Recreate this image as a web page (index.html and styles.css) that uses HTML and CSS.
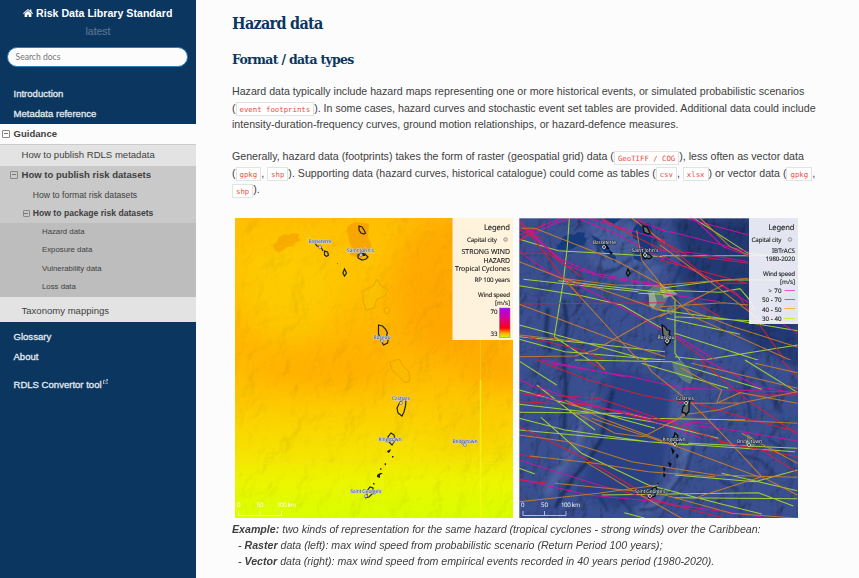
FILE: index.html
```
<!DOCTYPE html>
<html lang="en">
<head>
<meta charset="utf-8">
<title>Hazard data</title>
<link rel="stylesheet" href="styles.css">
</head>
<body>
<nav class="side">
  <div class="brand"><svg class="home" viewBox="0 0 20 16"><path fill="#fff" d="M10 0 0 8.400l1.300 1.500L10 2.700l8.700 7.200L20 8.400l-3.200-2.700V.8H14v2.500zM10 4 3.200 9.700V16H8.500v-4.500h3V16h5.300V9.700z"/></svg>Risk Data Library Standard</div>
  <div class="version">latest</div>
  <div class="search">Search docs</div>
  <a class="top intro">Introduction</a>
  <a class="top meta">Metadata reference</a>
  <a class="current"><i class="box"></i>Guidance</a>
  <a class="l2">How to publish RDLS metadata</a>
  <div class="open">
    <a class="l2b"><i class="box"></i>How to publish risk datasets</a>
    <a class="l3">How to format risk datasets</a>
    <a class="l3 bold"><i class="box"></i>How to package risk datasets</a>
  </div>
  <div class="deep">
    <a>Hazard data</a><a>Exposure data</a><a>Vulnerability data</a><a>Loss data</a>
  </div>
  <a class="l2 tax">Taxonomy mappings</a>
  <a class="top gloss">Glossary</a>
  <a class="top">About</a>
  <a class="top tool">RDLS Convertor tool<svg class="ext" viewBox="0 0 12 12"><path fill="none" stroke="#e4eaf0" stroke-width="1.500" d="M5 3H1v8h8V7M4.500 7.500 10.500 1.500M7 1.200h4V5"/></svg></a>
</nav>
<main>
  <h1>Hazard data</h1>
  <h2>Format / data types</h2>
  <p>Hazard data typically include hazard maps representing one or more historical events, or simulated probabilistic scenarios<br>(<code>event footprints</code>). In some cases, hazard curves and stochastic event set tables are provided. Additional data could include<br>intensity-duration-frequency curves, ground motion relationships, or hazard-defence measures.</p>
  <p>Generally, hazard data (footprints) takes the form of raster (geospatial grid) data (<code>GeoTIFF / COG</code>), less often as vector data<br>(<code>gpkg</code>, <code>shp</code>). Supporting data (hazard curves, historical catalogue) could come as tables (<code>csv</code>, <code>xlsx</code>) or vector data (<code>gpkg</code>,<br><code>shp</code>).</p>
  <div class="maps">
    <svg width="278" height="300" viewBox="235 218 278 300">
      <defs>
        <linearGradient id="heat" x1="0" y1="0" x2="0" y2="1">
          <stop offset="0" stop-color="#ffc000"/><stop offset=".15" stop-color="#ffc400"/><stop offset=".42" stop-color="#ffb600"/><stop offset=".54" stop-color="#ffbe00"/><stop offset=".66" stop-color="#fcd000"/><stop offset=".78" stop-color="#f6e200"/><stop offset=".88" stop-color="#ecf600"/><stop offset="1" stop-color="#d8ff00"/>
        </linearGradient>
        <linearGradient id="ramp" x1="0" y1="0" x2="0" y2="1">
          <stop offset="0" stop-color="#a800ff"/><stop offset=".4" stop-color="#e00080"/><stop offset=".68" stop-color="#ff0010"/><stop offset=".86" stop-color="#ffb000"/><stop offset="1" stop-color="#c8ff00"/>
        </linearGradient>
        <filter id="soft" x="-50%" y="-50%" width="200%" height="200%"><feGaussianBlur stdDeviation="14"/></filter>
        <filter id="relief" x="0" y="0" width="100%" height="100%">
          <feTurbulence type="fractalNoise" baseFrequency=".04 .035" numOctaves="4" seed="8"/>
          <feDiffuseLighting surfaceScale="6" diffuseConstant="1.150" lighting-color="#fff"><feDistantLight azimuth="215" elevation="60"/></feDiffuseLighting>
        </filter>
      </defs>
      <path fill="url(#heat)" d="M235 218h278v300H235z"/>
      <g filter="url(#soft)">
        <ellipse cx="290" cy="290" rx="50" ry="52" fill="#fccc00" opacity=".8"/>
        <ellipse cx="450" cy="285" rx="60" ry="70" fill="#ffa200" opacity=".75"/>
        <ellipse cx="325" cy="370" rx="70" ry="16" fill="#ffa600" opacity=".6"/>
        <ellipse cx="500" cy="368" rx="40" ry="14" fill="#ffa000" opacity=".7"/>
        <ellipse cx="470" cy="425" rx="40" ry="25" fill="#fac800" opacity=".5"/>
      </g>
      <path class="multiply" filter="url(#relief)" opacity=".18" d="M235 218h278v300H235z"/>
      <path fill="#f6a600" opacity=".8" d="M273 245l4-3 2-5 6-3 3 1 4-2 7 1-1 4 3 2-6 3-2 3-6 1-8 6-4-3z"/>
      <path fill="#f59a00" opacity=".7" d="M347 228l4-4 6-2 12 2-1 13 4 10-4 3-6 9-12-4 2-7-3-7z"/>
      <path fill="#f2c800" fill-opacity=".4" stroke="#e5a000" stroke-width=".8" d="M363 291l10-5 4-7 4 7 7 4-3 6-8 3-3 9-8 2-3-10zM384 309l3-2 3 3-2 4-3-1z"/>
      <path fill="#f6bd00" fill-opacity=".3" stroke="#e0a000" stroke-width=".8" d="M390 362l9-3 4 7 6 6 1 9-5 2-6-7-7-6z"/>
      <path stroke="#ffda20" stroke-width=".8" d="M235 463.500h278"/><path stroke="#ffd420" stroke-opacity=".5" d="M480.500 340v40"/><path stroke="#f8f820" stroke-opacity=".7" stroke-width="1.500" d="M480.500 380v138"/>
      <g fill="none" stroke="#202418" stroke-width="1.200">
        <path d="M359 226l3 1 2 3 1.500 3-1.500 1-3-1-2-3zM315 243l2 3 4 1 2 4M324.500 251l3 1 1 3-2 1.500-2-1.500zM358 255l3-2 4 1 3 3-2 2-4 1-4-2zM344.500 269l2 4-2 3-1.600-3zM378.500 325l4 1 3 3 2 4-1 2 2 3-1 5-4 2-3-6-2-5z"/>
        <path d="M401 401l3-2 2 1-.5 6-1.500 6-2 4-4-3-1-5 2-4zM391 433l3 2 1 5-3 5-3-3-1-5zM365 498l2-1v-6l3-4 3 1 0 5-4 4z"/>
      </g>
      <path fill="#222" d="M358 254h7v2h-5zM387 451l4-2-1 3-2 1zM392 456h1.500v1.500H392zM384 464l2-1v2.500zM380 468l2 1-2 1zM377 475l3-2h3l-3 2v3l-3-1zM373 483h1.500v1.500H373zM337 263h1v1z"/>
      <g class="names left">
        <text x="308.500" y="243" textLength="23">Basseterre</text><text x="347" y="252" textLength="27">Saint John's</text><text x="373.500" y="339" textLength="17">Roseau</text><text x="392" y="400" textLength="18">Castries</text><text x="378.500" y="440.500" textLength="23">Kingstown</text><text x="452.500" y="442.500" textLength="25">Bridgetown</text><text x="350.500" y="493" textLength="31">Saint George's</text>
      </g>
      <g fill="#dde" stroke="#667" stroke-width=".6"><circle cx="320" cy="247" r="1.500"/><circle cx="361" cy="255" r="1.500"/><circle cx="382" cy="341" r="1.500"/><circle cx="401" cy="403" r="1.500"/><circle cx="392" cy="442" r="1.500"/><circle cx="465" cy="445" r="1.500"/><circle cx="366" cy="496" r="1.500"/></g>
      <g class="scale"><text x="237" y="507">0</text><text x="256.500" y="507" textLength="7">50</text><text x="277" y="507" textLength="19">100 km</text><path d="M238.500 511v4.500H281.500V511M260 511v4"/></g>
      <path fill="#fff7ea" fill-opacity=".94" d="M452.500 218H513v122H452.500z"/>
      <g class="legend">
        <text class="title" x="484" y="230" textLength="26">Legend</text>
        <text x="467" y="241.500" textLength="30">Capital city</text>
        <text class="mid" x="461.500" y="254" textLength="48.500">STRONG WIND</text><text class="mid" x="483.500" y="262.500" textLength="26.500">HAZARD</text><text class="mid" x="455" y="271" textLength="55">Tropical Cyclones</text>
        <text x="474.500" y="282" textLength="35.500">RP 100 years</text><text x="478" y="297" textLength="32">Wind speed</text><text x="495" y="305" textLength="15">[m/s]</text><text x="490.500" y="314" textLength="7">70</text><text x="490.500" y="335.500" textLength="7">33</text>
      </g>
      <circle cx="505.500" cy="239.500" r="1.800" fill="#ddd" stroke="#777" stroke-width=".7"/>
      <path fill="url(#ramp)" stroke="#777" stroke-width=".5" d="M499.500 308h10.500v29.500h-10.500z"/>
    </svg>
    <svg width="279" height="300" viewBox="519 218 279 300">
      <defs>
        <filter id="sea" x="0" y="0" width="100%" height="100%">
          <feTurbulence type="fractalNoise" baseFrequency=".05 .04" numOctaves="5" seed="21"/>
          <feDiffuseLighting surfaceScale="8" diffuseConstant="1.200" lighting-color="#fff"><feDistantLight azimuth="215" elevation="55"/></feDiffuseLighting>
        </filter>
        <filter id="fade" x="-50%" y="-50%" width="200%" height="200%"><feGaussianBlur stdDeviation="3"/></filter>
        <filter id="thin" x="-50%" y="-50%" width="200%" height="200%"><feGaussianBlur stdDeviation="1.100"/></filter>
        <clipPath id="upper"><path d="M0 0h450v450H0z"/></clipPath>
      </defs>
      <path fill="#394f90" d="M519 218h279v300H519z"/>
      <g filter="url(#fade)">
        <path fill="#1c3268" opacity=".75" d="M672 218h126v150l-40-20-50-40-30-30 4-25z"/>
        <path fill="#5068a8" opacity=".6" d="M590 222h45l10 30 20 20-25 20-50-30zM655 375l30 10 10 50-14 40-12-40z"/>
        <path fill="none" stroke="#5b70ac" stroke-width="8" opacity=".7" d="M688 445l-10 30-22 30-18 8M595 395l-20 50-30 50"/>
      </g>
      <path class="multiply" filter="url(#sea)" opacity=".48" d="M519 218h279v300H519z"/>
      <g filter="url(#fade)"><path fill="#2b4283" d="M610 365l62 20-5 60-15 50-40 12-34-15 25-60z"/></g>
      <g filter="url(#thin)" fill="none" stroke="#14264f">
        <path stroke-width="3.500" opacity=".75" d="M613 390l-6 25-6 25-12 20-16 18-10 16-8 14M564 300l3 25-4 30 3 30-2 45M548 308l-2 22 4 22"/>
        <path stroke-width="1.800" opacity=".8" d="M694 445l-8 26-12 16-13 18-8 4-14 1M683 262l-10 22 7 30M632 258l-16 12-12 2M640 266l-14 10M594 238l10 22"/>
        <path stroke-width="1.500" opacity=".75" d="M742 372l6 30 3 18M756 370l12 22 14 20M740 455l20 5 14 14M620 498l12 14M600 497l8 14M720 480l18 10M760 335l18 6M770 440l14 10 8 16"/>
      </g>
      <path fill="#153a7d" d="M557 246l4-4 2-5 6-3 5 1 4-3 7 1-1 4 3 2-3 6-7 1-5 3-8 1-7-1zM632 232l3-6 4-4 12 2 2 12-2 6 1 8-5 5-5 7-8-3-1-5 6-5-1-8-5-3zM602 218h20l-8 6zM591 235l7 3 7 6 11 13-1 6-8-8-8-9z"/>
      <path fill="#64847c" fill-opacity=".8" d="M647 291l8-6 13 2 3 3-6 13-6 8-7-2zM672 362l9-2 9 10 3 8-3 6-8-4-8-9zM747 434l5 3 4 8-4 2-5-4zM667 308l5-2 3 5-4 4-4-2z"/>
      <path fill="#a5b4a0" fill-opacity=".8" d="M649 294l5-2 3 11-4 6-4-4zM660 290h12l6 4-6 2-8 2z"/>
      <g transform="translate(515 210) scale(.33333)" class="tracks"><g clip-path="url(#upper)">
        <path class="y" d="M13 88L130 122 450 140M163 24L157 110 145 215 118 380 240 462M25 208L370 245M13 227L200 257 320 285 450 360M13 345L200 395 450 465M13 380L240 402 450 425M13 388L150 425 450 450M370 250L450 253M130 212L450 248"/>
        <path class="m" d="M13 50L60 70 120 40 170 24M13 125L100 185 240 250 370 320 450 368M45 70L150 165 260 200 450 232M185 24L300 70 450 150M13 75L140 24M220 24L450 92M360 30L450 62M13 30L60 80 140 150 240 190 450 228M13 95L60 60"/>
        <path class="r" d="M13 35L90 130 145 205 200 262M13 130L100 130 200 200M13 282L450 278M13 375L200 420 270 450M265 30L450 125M370 24L450 110M13 60L80 85M13 90L90 40M260 24L320 60"/>
        <path class="o" d="M13 155L140 205 300 225 450 228M20 55L60 55 300 150 440 225M13 440L180 438 240 420 400 330 450 310M13 283L100 315 300 390 450 440M140 205L250 235 450 305M365 60L380 150 440 225M350 24L450 100M145 205L300 375 380 460M13 375L200 395"/>
      </g></g>
      <g transform="translate(660 210) scale(.33333)" class="tracks"><g clip-path="url(#upper)">
        <path class="y" d="M100 24L265 130 413 145M0 137H413M0 240L180 247 240 236 265 265 285 300M0 220L45 270 45 430 60 450M45 320L413 340M20 325L240 373M45 370L330 462M45 440L130 450 413 405M0 300L220 330 413 362M0 235L190 210H413"/>
        <path class="m" d="M0 60L50 70 265 125M75 24L265 75M0 120L110 130 265 155M100 24L190 110 413 190M0 135L150 205 413 370M0 250L180 275M45 375L200 470"/>
        <path class="r" d="M0 85L130 195 230 250 310 360 385 465M0 150L260 220M0 90L80 135 265 160M90 270L180 320M50 385L160 465M190 220H265M413 60L320 24"/>
        <path class="o" d="M120 24L210 110 265 135M0 105L150 215 300 330M0 225L265 205M0 290L190 278 265 285M0 225L100 320 413 460M50 285L220 350 413 412M0 320L190 225"/>
      </g></g>
      <g transform="translate(515 360) scale(.33333)" class="tracks">
        <path class="y" d="M15 5L125 75M65 75L200 180 240 210M13 90L120 120 330 180 420 205M13 157L330 160 400 175 690 180M13 133L250 160 410 185 610 235M13 175L150 210 400 245 840 275M13 210L400 245 520 255M78 172L200 280 400 375 610 430 740 462M13 325L60 342M328 458L390 475M180 0L470 5 740 88M380 10L640 85M690 0L847 97M520 250L847 265M480 345L720 365 847 330M480 413L847 416M260 405L730 398 835 438M620 340L847 392"/>
        <path class="m" d="M13 100L130 120 330 155 450 185 650 210 847 243M65 80L220 132 400 180 560 235M13 57L65 85M13 300L250 375 480 435 740 470M13 358L220 405 430 425M100 10L350 50 500 85 847 97M80 0L330 50M570 0L730 80 847 100M440 180L600 192"/>
        <path class="r" d="M65 0L220 60 380 105 510 130M13 100L250 115 400 165 640 250 847 290M13 125L220 135 410 180M13 200L200 290 430 425 620 472M555 0L690 115 847 222M13 283L70 295M800 0L847 52M530 125L710 180 847 215M220 5L270 30M610 245L740 270 847 338M13 360L100 370M700 105H847"/>
        <path class="o" d="M385 0L410 35 530 130 620 220 740 350 847 405M500 25L620 90 605 130 675 98 847 130M13 225L160 245 350 305 600 345 847 352M45 288L240 310 400 335 600 350M13 425L250 400 430 375M210 305L350 390 500 475M120 370L430 400 650 460 847 475M175 155L300 220 385 230 510 165M530 130L680 128 847 95M500 165L610 150 680 128M530 10L847 85M720 10L847 38M230 175L320 205 500 265 730 350M550 410L740 350M640 180L847 190M680 220L847 310M150 120L260 175 490 260M240 0L270 30"/>
      </g>
      <g fill="#66716c" stroke="#090d12" stroke-width="1.300">
        <path d="M643 226l4 1 3 6-2 1-4-2zM603 243l3 2 3 4-2-1zM610 252l2 1-1 1zM642 255l3-2 5 2 2 2-3 2-2-1-2 1zM628 269l2 4-2 3-1.500-3zM662 325l3 2 2 3 3 1-1 3 2 3-1 5-3 3-2-3 1-3-3-4zM685 401l3-2 2 2-1 3 0 7-3 4-1-2-3-1 1-5 2-2zM675 433l3 3-1 2 2 2-3 5-3-3-1-3 2-2zM672 449l2 2-1 2zM677 455l1 1-1 2zM669 463l2 1-1 2zM664 468l1 1-1 2zM664 474l1 1-1 2zM658 483v1zM649 498l2-3v-4l2-3 3-1 1 4-2 2v3z"/>
      </g>
      <g class="names right">
        <text x="593" y="243.500" textLength="23">Basseterre</text><text x="631.500" y="251.500" textLength="27">Saint John's</text><text x="657.500" y="338.500" textLength="17">Roseau</text><text x="676" y="399.500" textLength="18">Castries</text><text x="662.500" y="440.500" textLength="23">Kingstown</text><text x="737" y="442.500" textLength="25">Bridgetown</text><text x="634.500" y="493" textLength="31">Saint George's</text>
      </g>
      <g fill="#222" stroke="#eee" stroke-width=".8"><circle cx="604" cy="247" r="1.500"/><circle cx="645" cy="255" r="1.500"/><circle cx="667" cy="341" r="1.500"/><circle cx="686" cy="403" r="1.500"/><circle cx="675" cy="444" r="1.500"/><circle cx="749" cy="445" r="1.500"/><circle cx="650" cy="496" r="1.500"/></g>
      <g class="scale"><text x="521" y="507">0</text><text x="541" y="507" textLength="7">50</text><text x="561" y="507" textLength="19">100 km</text><path d="M523 511v4.500H566V511M544.500 511v4"/></g>
      <path fill="#f8f8ff" fill-opacity=".9" d="M749 218h49v106h-49z"/>
      <g class="legend">
        <text class="title" x="768.500" y="230" textLength="26">Legend</text>
        <text x="751.500" y="241.500" textLength="30">Capital city</text><text x="772" y="252.500" textLength="23">IBTrACS</text><text x="765.500" y="260.500" textLength="29.500">1980-2020</text><text x="763" y="276" textLength="32">Wind speed</text><text x="780" y="283.500" textLength="15">[m/s]</text>
        <text x="768.500" y="292.500" textLength="13">&gt; 70</text><text x="762" y="302" textLength="19.500">50 - 70</text><text x="762" y="311.500" textLength="19.500">40 - 50</text><text x="762" y="321" textLength="19.500">30 - 40</text>
      </g>
      <circle cx="790" cy="239.500" r="1.800" fill="#ddd" stroke="#777" stroke-width=".7"/>
      <path stroke="#f050c8" d="M784.500 290.500H795"/><path stroke="#f05060" d="M784.500 299.500H795"/><path stroke="#ffb040" d="M784.500 308.500H795"/><path stroke="#d0f030" d="M784.500 318.500H795"/>
      <path fill="none" stroke="#fff" stroke-opacity=".3" d="M519.500 218v300M519 218.500h230"/>
    </svg>
  </div>
  <div class="caption"><b>Example:</b> two kinds of representation for the same hazard (tropical cyclones - strong winds) over the Caribbean:<br><span>- <b>Raster</b> data (left): max wind speed from probabilistic scenario (Return Period 100 years);</span><br><span>- <b>Vector</b> data (right): max wind speed from empirical events recorded in 40 years period (1980-2020).</span></div>
</main>
</body>
</html>
```
FILE: styles.css
```
* { box-sizing: border-box; }
body { margin: 0; width: 859px; height: 578px; display: flex; overflow: hidden; background: #fcfcfc; color: #404040; font-family: "Liberation Sans", Arial, sans-serif; white-space: nowrap; }
.side { width: 196px; height: 578px; flex: none; background: #0a365f; font-size: 9.56px; }
.side a { display: block; color: #404040; }
.brand { height: 14px; margin-top: 6px; padding-left: 23px; display: flex; align-items: center; color: #fff; font-size: 10.63px; font-weight: bold; line-height: 14px; }
.home { width: 10px; height: 8px; margin-right: 3px; }
.version { height: 14px; margin-top: 5px; text-align: center; color: #57738f; font-size: 10.46px; line-height: 14px; -webkit-text-stroke: .2px #57738f; }
.search { width: 181px; height: 20px; margin: 8px 0 0 7px; padding-left: 7.500px; border: 1px solid #2980b9; border-radius: 10px; background: #fcfcfc; color: #777; font: 8.59px/18px Lato, sans-serif; }
.side .top { height: 20px; padding-left: 13.500px; line-height: 20px; color: #e4eaf0; -webkit-text-stroke: .3px #e4eaf0; }
.side .intro { margin-top: 17px; }
.side .meta { line-height: 19px; }
.side .current { height: 21px; background: #fcfcfc; border-bottom: 1px solid #ccc; padding-left: 13.500px; font-weight: bold; line-height: 20px; }
.side .l2 { height: 21px; background: #e3e3e3; padding-left: 21.500px; line-height: 20px; }
.open { height: 57px; background: #c9c9c9; }
.side .l2b { height: 19px; padding-left: 21.500px; font-weight: bold; line-height: 18px; }
.side .l3 { height: 19px; padding-left: 32.800px; font-size: 8.62px; line-height: 20px; }
.side .bold { font-weight: bold; line-height: 19px; }
.deep { height: 74px; background: #bdbdbd; font-size: 7.800px; }
.deep a { height: 18.300px; padding-left: 42px; line-height: 18px; }
.side .tax { height: 25px; padding-top: 4px; }
.side .gloss { margin-top: 5px; }
.side .tool { margin-top: 8px; }
.box { display: inline-block; width: 8px; height: 8px; margin: 0 3.500px 0 -11.500px; border: 1px solid #888; border-radius: 1px; background: linear-gradient(#777, #777) center / 4px 1px no-repeat; vertical-align: -.500px; }
.bold .box { width: 7px; height: 7px; margin: 0 3px 0 -10px; }
.ext { width: 5.500px; height: 5.500px; margin-left: 1px; vertical-align: 4px; }
main { width: 628px; padding: 0 0 0 36px; font-size: 10.630px; }
h1, h2 { margin: 0; color: #0a365f; font-family: "Roboto Slab", "DejaVu Serif Condensed", "DejaVu Serif", serif; font-weight: bold; }
h1 { height: 22px; margin-top: 13px; font-size: 16px; line-height: 22px; letter-spacing: -.72px; }
h2 { height: 20px; margin-top: 14px; font-size: 13.800px; line-height: 20px; letter-spacing: -.67px; }
p { height: 49px; margin: 14px 0 16px; line-height: 16.500px; }
p + p { margin: 0; }
code { padding: 1.500px 3px; border: 1px solid #e1e4e5; background: #fff; color: #e74c3c; font-family: "DejaVu Sans Mono", monospace; font-size: 7.340px; line-height: 0; vertical-align: 0; }
.maps { height: 300px; margin: 21px 0 0 3px; display: flex; gap: 6px; }
.maps svg { display: block; flex: none; text-rendering: geometricPrecision; }
.multiply { mix-blend-mode: multiply; }
.tracks path { fill: none; stroke-width: 3.200; stroke-opacity: .88; }
.tracks .y { stroke: #b0e030; }
.tracks .m { stroke: #d80fa0; }
.tracks .r { stroke: #e01a3c; }
.tracks .o { stroke: #cf8028; }
.names text { font: 5px "Open Sans", sans-serif; paint-order: stroke; stroke-width: 1.200px; }
.left text { fill: #444; stroke: #c8d0df; }
.right text { fill: #eef; stroke: #26303f; }
.scale text { font: 6.200px "Open Sans", sans-serif; fill: #fff; }
.scale path { fill: none; stroke: #fff; stroke-width: .8; stroke-opacity: .8; }
.legend text { font: 6.200px "Noto Sans", sans-serif; fill: #222; stroke: #222; stroke-width: .1px; }
.legend .mid { font-size: 6.900px; }
.legend .title { font-size: 7.600px; }
.caption { margin-top: 3px; font-style: italic; line-height: 16.200px; }
.caption span { padding-left: 6px; }
```
